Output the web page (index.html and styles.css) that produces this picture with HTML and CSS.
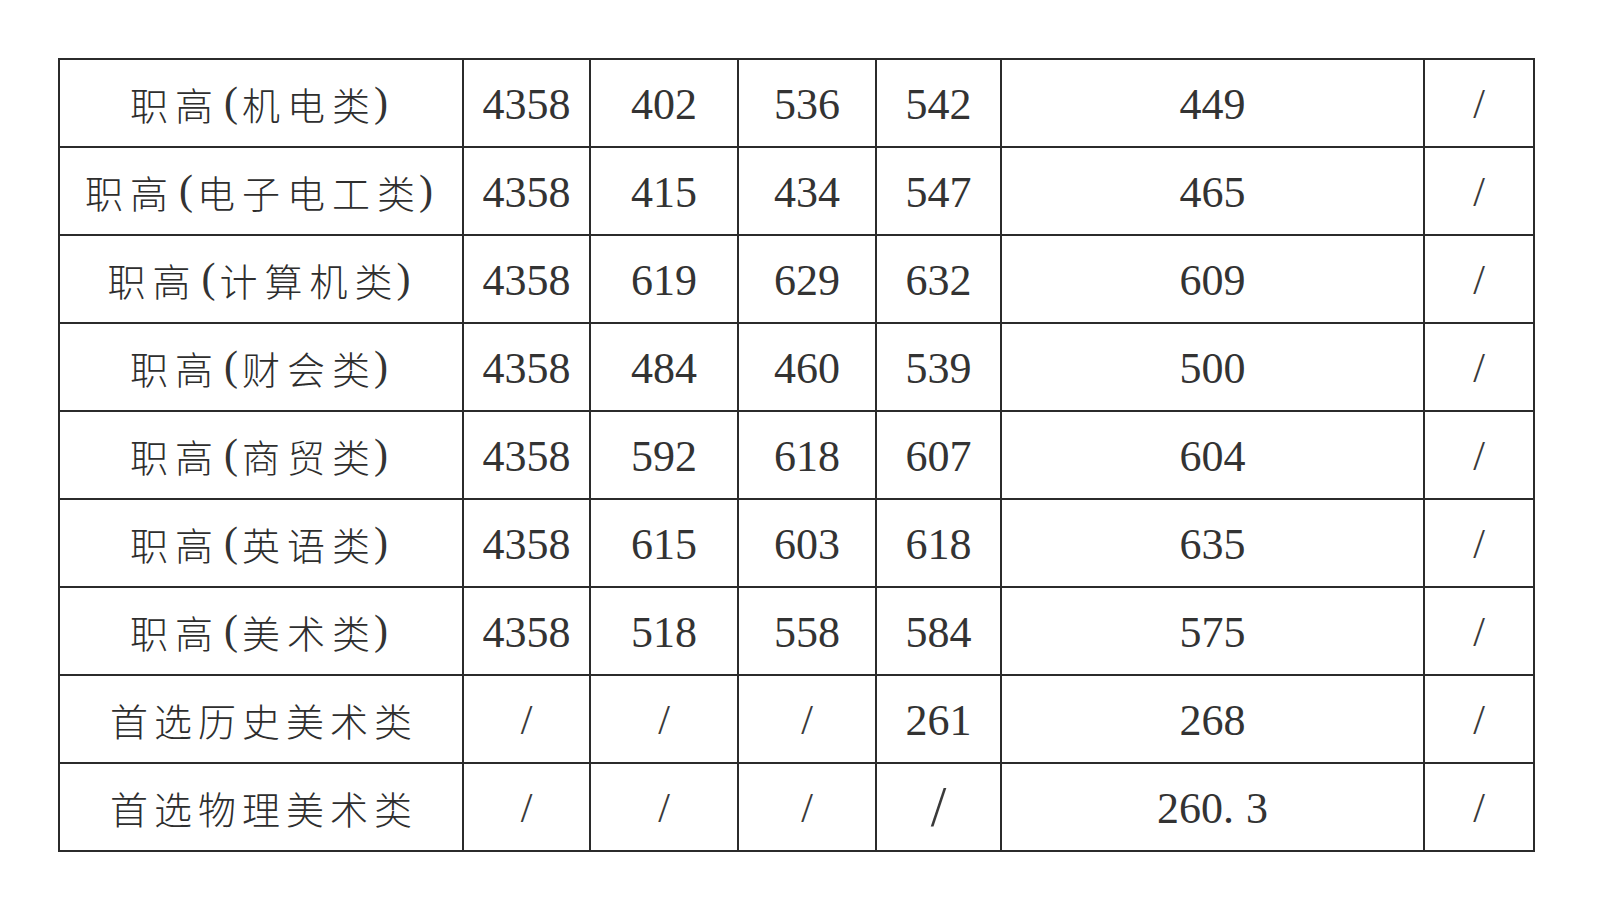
FILE: index.html
```html
<!DOCTYPE html>
<html lang="zh-CN">
<head>
<meta charset="utf-8">
<title>录取分数</title>
<link rel="stylesheet" href="styles.css">
</head>
<body>
<div class="sheet">
  <div class="c name">职高<span class="p po">(</span>机电类<span class="p pc">)</span></div><div class="c num">4358</div><div class="c num">402</div><div class="c num">536</div><div class="c num">542</div><div class="c num">449</div><div class="c num sl">/</div>
  <div class="c name">职高<span class="p po">(</span>电子电工类<span class="p pc">)</span></div><div class="c num">4358</div><div class="c num">415</div><div class="c num">434</div><div class="c num">547</div><div class="c num">465</div><div class="c num sl">/</div>
  <div class="c name">职高<span class="p po">(</span>计算机类<span class="p pc">)</span></div><div class="c num">4358</div><div class="c num">619</div><div class="c num">629</div><div class="c num">632</div><div class="c num">609</div><div class="c num sl">/</div>
  <div class="c name">职高<span class="p po">(</span>财会类<span class="p pc">)</span></div><div class="c num">4358</div><div class="c num">484</div><div class="c num">460</div><div class="c num">539</div><div class="c num">500</div><div class="c num sl">/</div>
  <div class="c name">职高<span class="p po">(</span>商贸类<span class="p pc">)</span></div><div class="c num">4358</div><div class="c num">592</div><div class="c num">618</div><div class="c num">607</div><div class="c num">604</div><div class="c num sl">/</div>
  <div class="c name">职高<span class="p po">(</span>英语类<span class="p pc">)</span></div><div class="c num">4358</div><div class="c num">615</div><div class="c num">603</div><div class="c num">618</div><div class="c num">635</div><div class="c num sl">/</div>
  <div class="c name">职高<span class="p po">(</span>美术类<span class="p pc">)</span></div><div class="c num">4358</div><div class="c num">518</div><div class="c num">558</div><div class="c num">584</div><div class="c num">575</div><div class="c num sl">/</div>
  <div class="c name tight">首选历史美术类</div><div class="c num sl">/</div><div class="c num sl">/</div><div class="c num sl">/</div><div class="c num">261</div><div class="c num">268</div><div class="c num sl">/</div>
  <div class="c name tight">首选物理美术类</div><div class="c num sl">/</div><div class="c num sl">/</div><div class="c num sl">/</div><div class="c num sl big">/</div><div class="c num">260<span class="dot">.</span>3</div><div class="c num sl">/</div>
</div>
</body>
</html>
```

FILE: styles.css
```css
html, body {
  margin: 0;
  padding: 0;
  background: #ffffff;
}

.sheet {
  margin: 58px 0 0 58px;
  display: grid;
  grid-template-columns: 404px 127px 148px 138px 125px 423px 110px;
  grid-auto-rows: 88px;
  width: max-content;
  border-top: 2px solid #2b2b2b;
  border-left: 2px solid #2b2b2b;
}

.c {
  box-sizing: border-box;
  border-right: 2px solid #2b2b2b;
  border-bottom: 2px solid #2b2b2b;
  display: flex;
  align-items: center;
  justify-content: center;
  white-space: nowrap;
}

.name {
  font-family: "Liberation Serif", "Noto Sans CJK SC", serif;
  font-weight: 300;
  font-size: 38px;
  color: #2e2e2e;
  letter-spacing: 7px;
  padding-right: 4px;
}

.name.tight {
  letter-spacing: 6px;
  padding-left: 6px;
  padding-right: 0;
}

.p {
  position: relative;
  top: -1px;
  font-size: 42px;
  font-weight: 400;
  color: #333;
}

.po {
  letter-spacing: 4px;
  margin-left: 4px;
}

.pc {
  letter-spacing: 0;
  margin-left: -3px;
}

.num {
  font-family: "Liberation Serif", serif;
  font-size: 44px;
  color: #333;
  padding-top: 2px;
}

.dot {
  letter-spacing: 12px;
}

.sl {
  font-size: 42px;
  color: #3a3a3a;
}

.sl.big {
  font-size: 56px;
  padding-top: 0;
}
```
